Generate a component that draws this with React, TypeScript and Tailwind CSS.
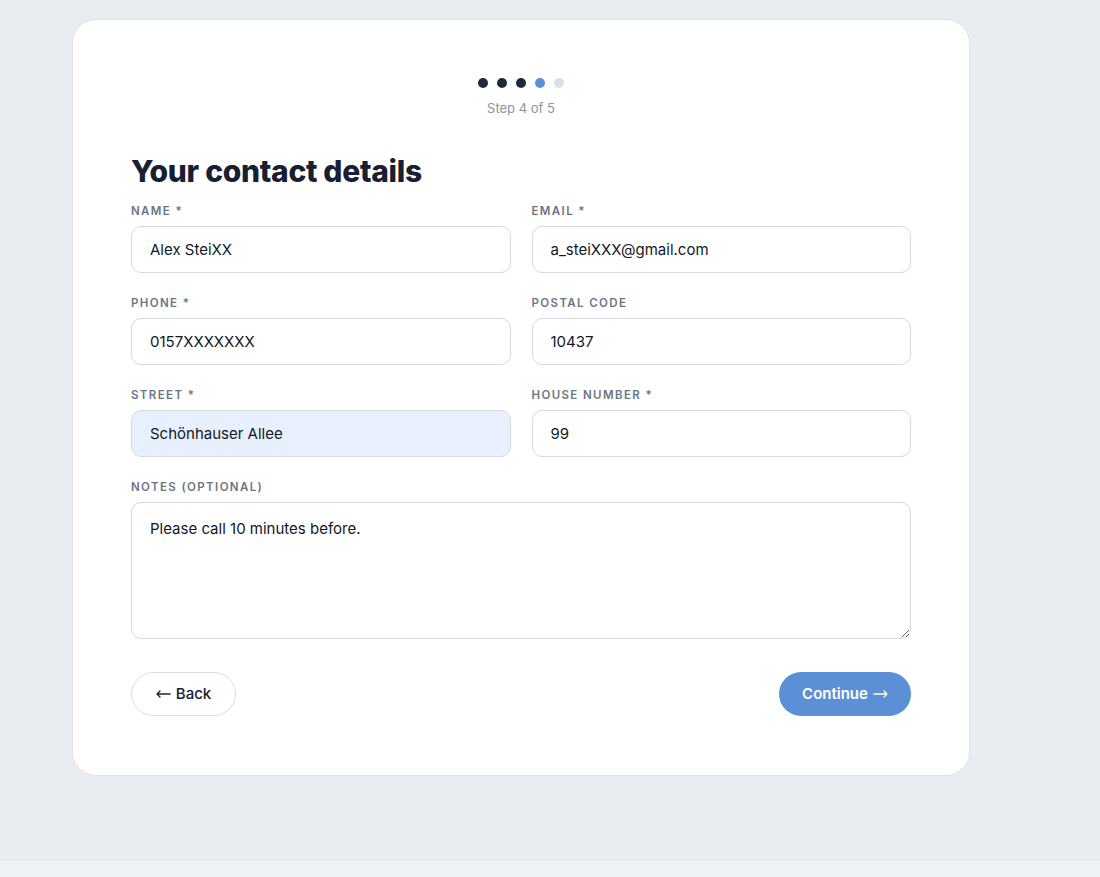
import React from 'react';

const font = { fontFamily: 'Inter, "Noto Sans", sans-serif' };

function Field({
  label,
  value,
  autofill,
}: {
  label: string;
  value: string;
  autofill?: boolean;
}) {
  return (
    <div className="flex flex-col">
      <label className="text-[11.5px] font-semibold tracking-[0.12em] text-[#6b7683] leading-[14px] uppercase">
        {label}
      </label>
      <input
        readOnly
        value={value}
        className={`mt-[8px] h-[47px] rounded-[10px] border border-[#d5dae1] px-[18px] text-[15px] text-[#111827] outline-none ${
          autofill ? 'bg-[#e8f0fe]' : 'bg-white'
        }`}
      />
    </div>
  );
}

function Arrow({ left }: { left?: boolean }) {
  return (
    <svg
      width="15"
      height="8"
      viewBox="0 0 15 8"
      fill="none"
      stroke="currentColor"
      strokeWidth="1.3"
      strokeLinecap="round"
      strokeLinejoin="round"
      className={left ? '' : 'rotate-180'}
    >
      <path d="M1 4h13M1 4l3-3M1 4l3 3" />
    </svg>
  );
}

export default function App() {
  return (
    <div className="min-h-[877px] bg-[#e9edf2] flex flex-col" style={font}>
      <main className="h-[859px] pt-[19px]">
        <div className="ml-[72px] w-[898px] rounded-[24px] border border-[#dfe3e8] bg-white px-[58px] pt-[58px] pb-[59px]">
          {/* progress */}
          <div className="flex flex-col items-center">
            <div className="flex gap-[9px]">
              <span className="h-[10px] w-[10px] rounded-full bg-[#1e293b]" />
              <span className="h-[10px] w-[10px] rounded-full bg-[#1e293b]" />
              <span className="h-[10px] w-[10px] rounded-full bg-[#1e293b]" />
              <span className="h-[10px] w-[10px] rounded-full bg-[#5b8fd6]" />
              <span className="h-[10px] w-[10px] rounded-full bg-[#d9e0e8]" />
            </div>
            <div className="mt-[12px] text-[13px] leading-[16px] text-[#8a94a3]">Step 4 of 5</div>
          </div>

          <h1 className="mt-[36px] text-[30px] font-extrabold leading-[38px] tracking-[-0.01em] text-[#172033]">
            Your contact details
          </h1>

          <div className="mt-[14px] grid grid-cols-2 gap-x-[21px] gap-y-[23px]">
            <Field label="Name *" value="Alex SteiXX" />
            <Field label="Email *" value="a_steiXXX@gmail.com" />
            <Field label="Phone *" value="0157XXXXXXX" />
            <Field label="Postal code" value="10437" />
            <Field label="Street *" value="Schönhauser Allee" autofill />
            <Field label="House number *" value="99" />
            <div className="col-span-2 flex flex-col">
              <label className="text-[11.5px] font-semibold tracking-[0.12em] text-[#6b7683] leading-[14px] uppercase">
                Notes (optional)
              </label>
              <textarea
                readOnly
                value="Please call 10 minutes before."
                className="mt-[8px] h-[137px] rounded-[10px] border border-[#d5dae1] bg-white px-[18px] py-[15px] text-[15px] leading-[22px] text-[#111827] outline-none"
              />
            </div>
          </div>

          <div className="mt-[33px] flex items-center justify-between">
            <button className="flex h-[44px] w-[105px] items-center justify-center gap-[5px] rounded-full border border-[#d9dde3] bg-white text-[15px] font-medium text-[#172033]">
              <Arrow left />
              Back
            </button>
            <button className="flex h-[44px] w-[132px] items-center justify-center gap-[5px] rounded-full bg-[#5b8fd6] text-[15px] font-semibold text-white">
              Continue
              <Arrow />
            </button>
          </div>
        </div>
      </main>
      <footer className="flex-1 border-t border-[#dde3ec] bg-[#eef1f5]" />
    </div>
  );
}
